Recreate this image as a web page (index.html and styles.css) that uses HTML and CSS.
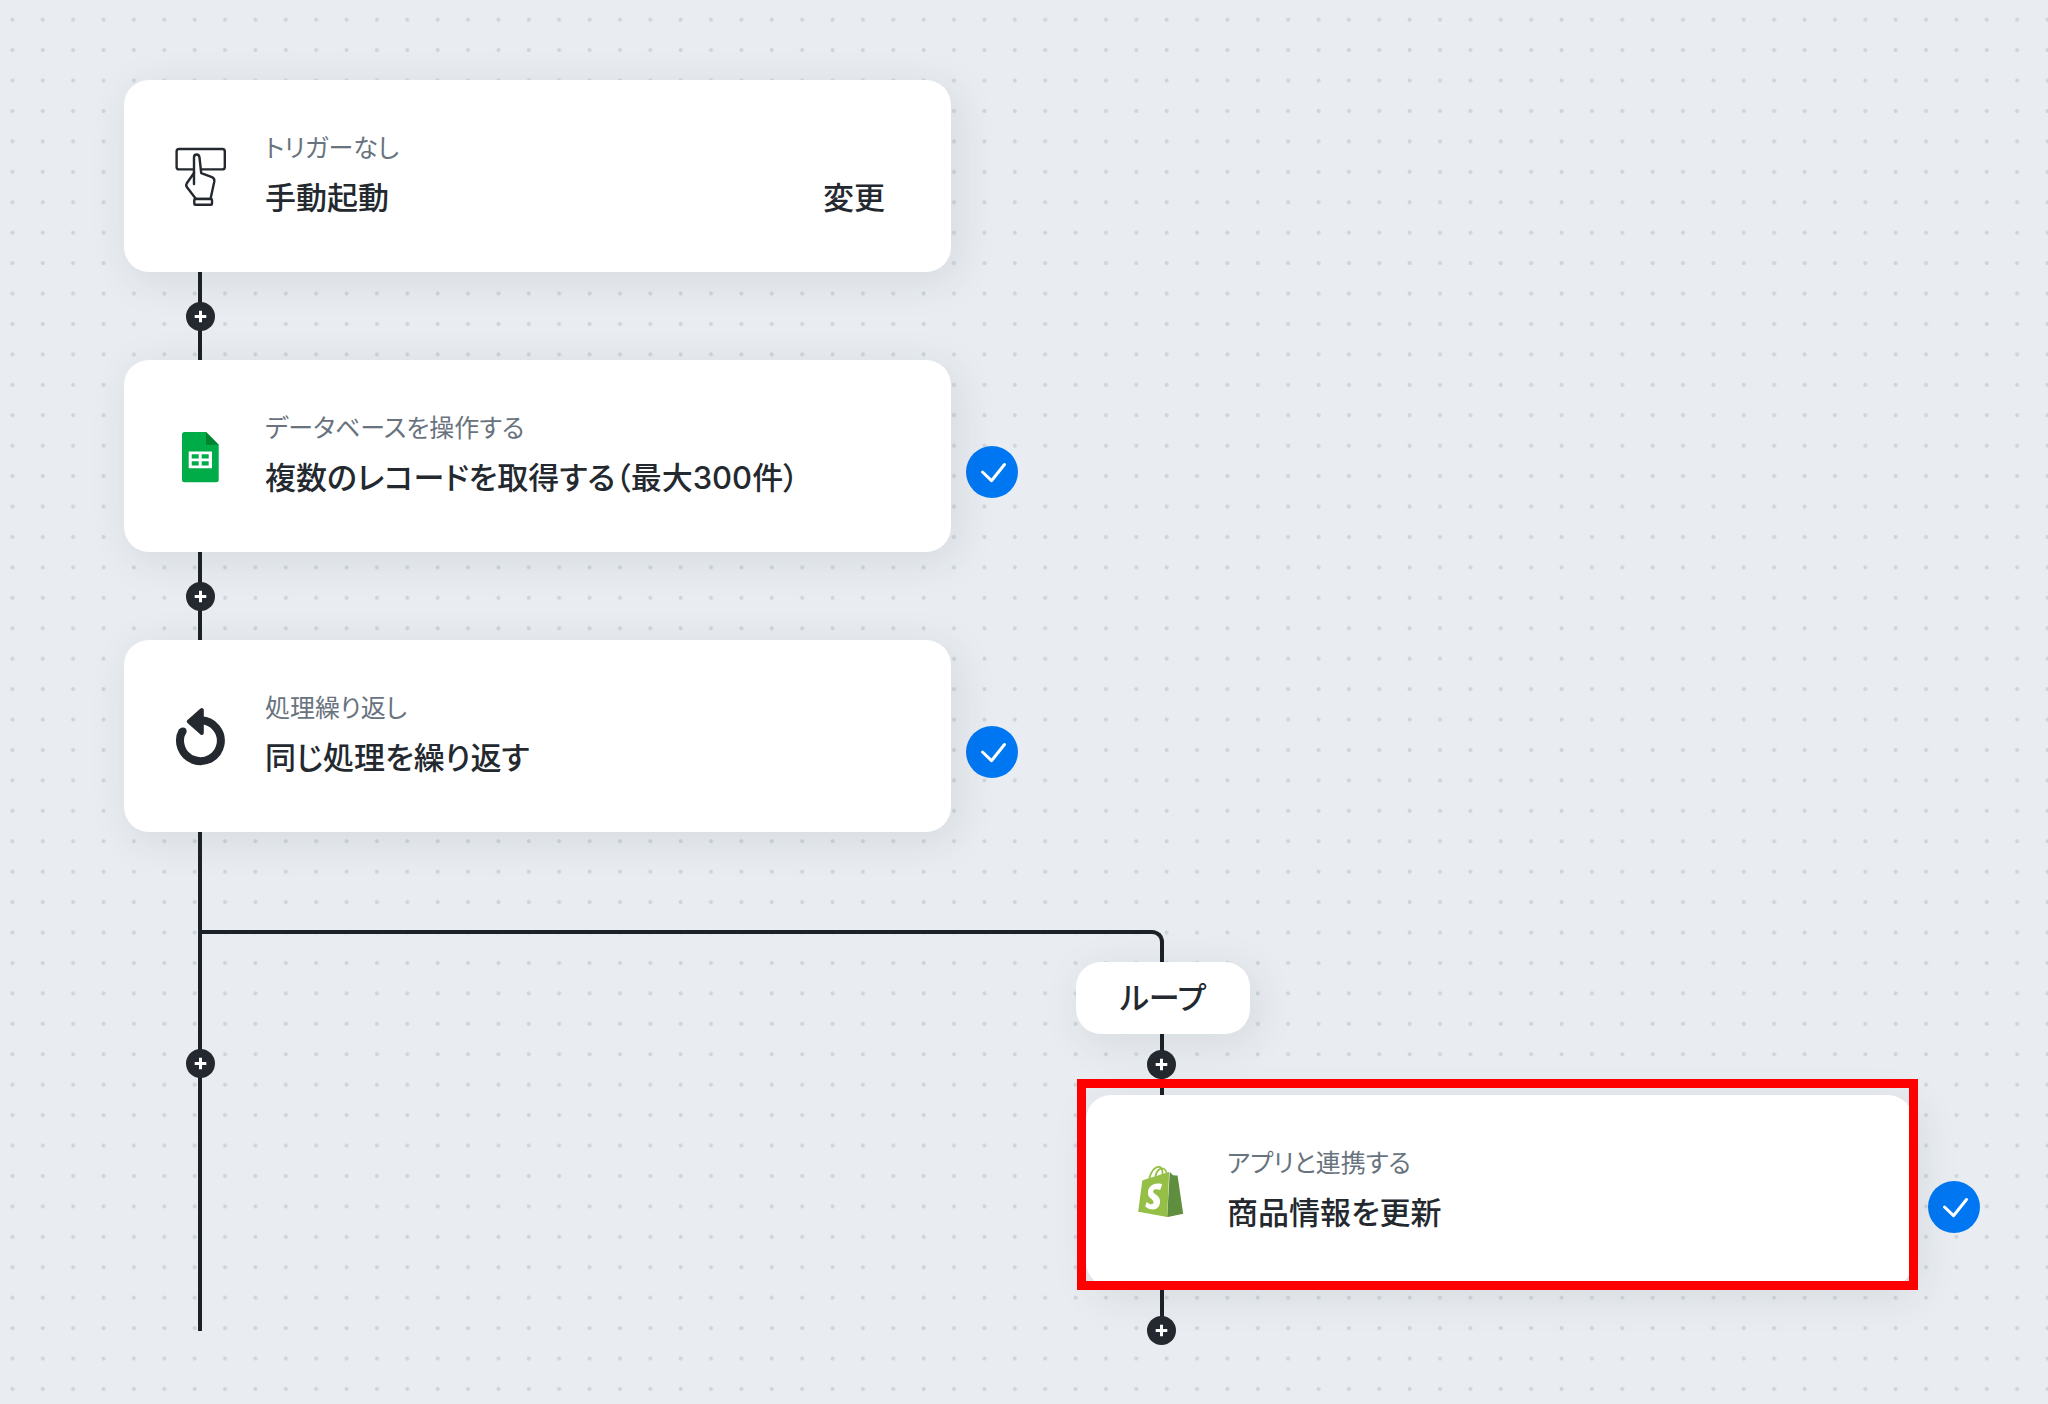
FILE: index.html
```html
<!DOCTYPE html>
<html lang="ja">
<head>
    <meta charset="UTF-8">
    <meta name="viewport" content="width=device-width, initial-scale=1.0">
    <title>フローボット</title>
    <link rel="stylesheet" href="styles.css">
</head>
<body>
    <!-- Shared icons -->
    <svg class="sprite" aria-hidden="true">
        <symbol id="icon-plus" viewBox="0 0 29 29">
            <path d="M14.5 8.7v11.6M8.7 14.5h11.6" fill="none" stroke="#fff" stroke-width="3"/>
        </symbol>
        <symbol id="icon-check" viewBox="0 0 52 52">
            <path d="M16.5 26l9 8.7L38.5 18.500" fill="none" stroke="#fff" stroke-width="3" stroke-linecap="round" stroke-linejoin="round"/>
        </symbol>
    </svg>

    <main class="flow">
        <!-- Trigger -->
        <div class="step">
            <section class="card">
                <svg class="icon" viewBox="0 0 60 60" aria-hidden="true">
                    <g fill="#fff" stroke="#24292f" stroke-width="2.4" stroke-linejoin="round" stroke-linecap="round">
                        <rect x="6.6" y="3" width="48.2" height="20.4" rx="2.5"/>
                        <path d="M24 27v-15.500c0-4 5-4 5.500 0l1.700 15.700 10.800 4c2 .8 2.600 2.400 2.300 4.300l-3.800 17.500h-14.500l-9-11.700c-1-1.300-1-2.700-.2-4z"/>
                        <path d="M24 26v12"/>
                        <rect x="24.300" y="53" width="17.700" height="5.700" rx="1"/>
                    </g>
                </svg>
                <div class="text">
                    <p class="label">トリガーなし</p>
                    <h2 class="title">手動起動</h2>
                </div>
                <button type="button" class="change">変更</button>
            </section>
        </div>

        <div class="connector">
            <button type="button" class="add" aria-label="追加"><svg><use href="#icon-plus"/></svg></button>
        </div>

        <!-- Google Sheets -->
        <div class="step">
            <section class="card">
                <svg class="icon" viewBox="0 0 60 60" aria-hidden="true">
                    <path d="M14.500 6H36l12.700 12.700v35.100a2.500 2.500 0 0 1-2.500 2.500H14.500a2.500 2.500 0 0 1-2.500-2.500V8.500A2.500 2.500 0 0 1 14.500 6z" fill="#00ac47"/>
                    <path d="M36 6l12.700 12.700H36z" fill="#00832d"/>
                    <path fill="#fff" fill-rule="evenodd" d="M18.700 25.500H42v16.800H18.700zM21.700 28.300v4.300h7v-4.300zM31.700 28.300v4.300h7v-4.300zM21.700 35.200v4.300h7v-4.300zM31.700 35.200v4.300h7v-4.300z"/>
                </svg>
                <div class="text">
                    <p class="label">データベースを操作する</p>
                    <h2 class="title">複数のレコードを取得する（最大300件）</h2>
                </div>
            </section>
            <span class="done"><svg><use href="#icon-check"/></svg></span>
        </div>

        <div class="connector">
            <button type="button" class="add" aria-label="追加"><svg><use href="#icon-plus"/></svg></button>
        </div>

        <!-- Repeat -->
        <div class="step">
            <section class="card">
                <svg class="icon" viewBox="0 0 60 60" aria-hidden="true">
                    <path d="M12.600 24.800A20.400 20.400 0 1 0 31 14.300" fill="none" stroke="#24292f" stroke-width="8"/>
                    <circle cx="12.900" cy="25.200" r="3.700" fill="#24292f"/>
                    <path d="M31.800 4v23L18.800 15.400z" fill="#24292f" stroke="#24292f" stroke-width="4" stroke-linejoin="round"/>
                </svg>
                <div class="text">
                    <p class="label">処理繰り返し</p>
                    <h2 class="title">同じ処理を繰り返す</h2>
                </div>
            </section>
            <span class="done"><svg><use href="#icon-check"/></svg></span>
        </div>

        <!-- Loop branch -->
        <div class="branches">
            <div class="trunk">
                <button type="button" class="add" aria-label="追加"><svg><use href="#icon-plus"/></svg></button>
            </div>
            <div class="elbow"></div>
            <div class="loop">
                <div class="pill">ループ</div>
                <div class="connector short">
                    <button type="button" class="add" aria-label="追加"><svg><use href="#icon-plus"/></svg></button>
                </div>
                <!-- Shopify -->
                <div class="step">
                    <section class="card highlight">
                        <svg class="icon" viewBox="0 0 60 60" aria-hidden="true">
                            <g transform="translate(3.200 5) scale(2.130)">
                                <path fill="#5e8e3e" d="M15.009 24l.328-.021 7.216-1.561s-2.604-17.613-2.625-17.730c-.018-.116-.114-.192-.211-.192s-1.929-.136-1.929-.136-1.275-1.274-1.439-1.411c-.045-.037-.075-.057-.121-.074z"/>
                                <path fill="#95bf47" fill-rule="evenodd" d="M11.710 11.305s-.810-.424-1.774-.424c-1.447 0-1.504.906-1.504 1.141 0 1.232 3.240 1.715 3.240 4.629 0 2.295-1.440 3.760-3.406 3.760-2.354 0-3.540-1.465-3.540-1.465l.646-2.086s1.245 1.066 2.280 1.066c.675 0 .975-.545.975-.932 0-1.619-2.654-1.694-2.654-4.359-.034-2.237 1.571-4.416 4.827-4.416 1.257 0 1.875.361 1.875.361l-.945 2.715-.020.010zM11.170.830c.136 0 .271.038.405.135-.984.465-2.064 1.639-2.508 3.992-.656.213-1.293.405-1.889.578C7.697 3.750 8.951.840 11.170.840V.830zm1.235 2.949v.135c-.754.232-1.583.484-2.394.736.466-1.777 1.333-2.645 2.085-2.971.193.501.309 1.176.309 2.100zm.539-2.234c.694.074 1.141.867 1.429 1.755-.349.114-.735.231-1.158.366v-.252c0-.752-.096-1.371-.271-1.871v.002zm2.992 1.289c-.020 0-.060.021-.078.021s-.289.075-.714.210c-.423-1.233-1.176-2.370-2.508-2.370h-.115C12.135.209 11.669 0 11.265 0 8.159 0 6.675 3.877 6.210 5.846c-1.194.365-2.063.636-2.160.674-.675.213-.694.232-.772.870-.075.462-1.830 14.063-1.830 14.063L15.009 24l.927-21.166z"/>
                            </g>
                        </svg>
                        <div class="text">
                            <p class="label">アプリと連携する</p>
                            <h2 class="title">商品情報を更新</h2>
                        </div>
                    </section>
                    <span class="done"><svg><use href="#icon-check"/></svg></span>
                </div>
                <div class="connector end">
                    <button type="button" class="add" aria-label="追加"><svg><use href="#icon-plus"/></svg></button>
                </div>
            </div>
        </div>
    </main>
</body>
</html>
```
FILE: styles.css
```css
* {
    box-sizing: border-box;
}
body {
    margin: 0;
    min-height: 100vh;
    font-family: Inter, "Noto Sans CJK JP", sans-serif;
    font-feature-settings: "palt";
    color: #24292f;
    background-color: #e9edf2;
    /* Dot grid */
    background-image: url("data:image/svg+xml,%3Csvg xmlns='http://www.w3.org/2000/svg' width='243' height='213'%3E%3Cpattern id='p' width='30.375' height='30.4286' patternUnits='userSpaceOnUse'%3E%3Ccircle cx='12.4' cy='19.7' r='2.1' fill='%23cdd4da'/%3E%3C/pattern%3E%3Crect width='243' height='213' fill='url(%23p)'/%3E%3C/svg%3E");
}
p, h2 {
    margin: 0;
}
button {
    padding: 0;
    border: none;
    font-family: inherit;
    font-feature-settings: inherit;
    color: inherit;
    cursor: pointer;
}
.sprite {
    display: none;
}
.flow {
    padding: 80px 68px 0 124px;
}
.step {
    display: flex;
    align-items: center;
    gap: 15px;
}
.card {
    position: relative;
    display: flex;
    align-items: center;
    gap: 35px;
    width: 827px;
    padding: 50px 66px 50px 46px;
    background: #ffffff;
    border-radius: 25px;
    box-shadow: 6px 8px 42px rgba(40, 50, 50, 0.1);
}
.icon {
    flex: none;
    width: 60px;
    height: 60px;
    overflow: visible;
}
.text {
    flex: 1;
}
.label {
    margin-bottom: 8px;
    font-size: 25px;
    line-height: 36px;
    color: #68737e;
}
.title, .change, .pill {
    font-size: 31px;
    font-weight: 500;
    line-height: 48px;
}
.change {
    align-self: flex-end;
    background: none;
}
.done {
    width: 52px;
    height: 52px;
    margin-top: 32px;
    border-radius: 50%;
    background: #0077f2;
}
.done svg {
    display: block;
    width: 52px;
    height: 52px;
}

/* Lines between the steps */
.connector {
    position: relative;
    display: flex;
    align-items: center;
    width: 29px;
    height: 88px;
    margin-left: 62px;
}
.connector::before {
    content: "";
    position: absolute;
    top: 0;
    bottom: 0;
    left: 12px;
    width: 4px;
    background: #1c2127;
}
.add {
    position: relative;
    width: 29px;
    height: 29px;
    border-radius: 50%;
    background: #24292f;
}
.add svg {
    display: block;
    width: 29px;
    height: 29px;
}

/* Branch */
.branches {
    display: grid;
    grid-template-columns: 952px auto;
}
.trunk {
    position: relative;
    grid-area: 1 / 1 / 3 / 2;
    margin: 0 0 14px 74px;
    border-left: 4px solid #1c2127;
}
.trunk .add {
    position: absolute;
    top: 217px;
    left: -16px;
}
.elbow {
    position: relative;
    grid-area: 1 / 1 / 2 / 3;
    width: 966px;
    height: 32px;
    margin: 98px 0 0 74px;
    border: 4px solid #1c2127;
    border-width: 4px 4px 0 0;
    border-top-right-radius: 12px;
}
.loop {
    grid-area: 2 / 2 / 3 / 3;
}
.pill {
    width: 174px;
    padding: 12px 0;
    text-align: center;
    background: #ffffff;
    border-radius: 25px;
    box-shadow: 6px 8px 42px rgba(40, 50, 50, 0.1);
}
.loop .step {
    margin-left: 10px;
}
.loop .connector {
    margin-left: 71px;
}
.loop .connector::before {
    left: 13px;
}
.connector.short {
    height: 61px;
}
.connector.end {
    align-items: flex-end;
    height: 58px;
}
.connector.end::before {
    bottom: 14px;
}
.highlight::after {
    content: "";
    position: absolute;
    z-index: 1;
    inset: -16px -5px -3px -9px;
    border: 9px solid #ff0000;
}
```
